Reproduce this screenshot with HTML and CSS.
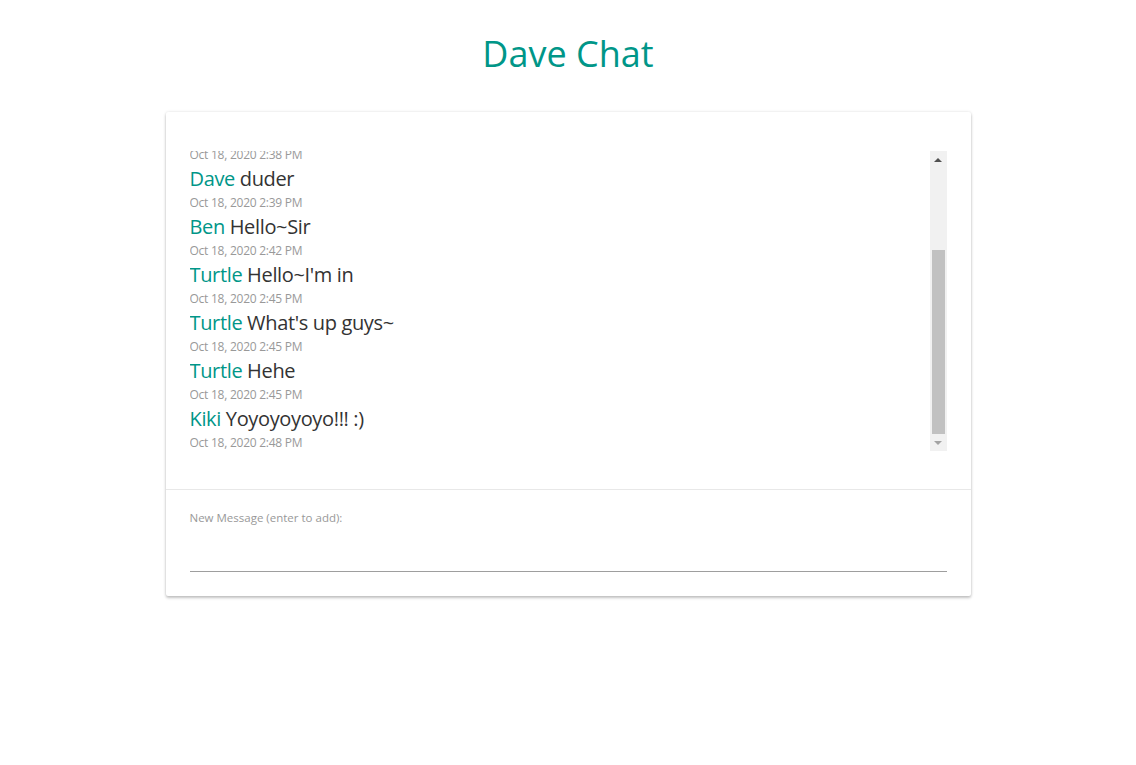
FILE: index.html
```html
<!DOCTYPE html>
<html lang="en">
<head>
<meta charset="utf-8">
<title>Dave Chat</title>
<link rel="stylesheet" href="styles.css">
</head>
<body>
<h1 class="title">Dave Chat</h1>
<main class="card">
  <section class="messages-wrap">
    <div class="messages">
      <div class="msg"><div class="line"><span class="name">Ben</span> Hi there</div><div class="date">Oct 18, 2020 2:38 PM</div></div>
      <div class="msg"><div class="line"><span class="name">Dave</span> duder</div><div class="date">Oct 18, 2020 2:39 PM</div></div>
      <div class="msg"><div class="line"><span class="name">Ben</span> Hello~Sir</div><div class="date">Oct 18, 2020 2:42 PM</div></div>
      <div class="msg"><div class="line"><span class="name">Turtle</span> Hello~I'm in</div><div class="date">Oct 18, 2020 2:45 PM</div></div>
      <div class="msg"><div class="line"><span class="name">Turtle</span> What's up guys~</div><div class="date">Oct 18, 2020 2:45 PM</div></div>
      <div class="msg"><div class="line"><span class="name">Turtle</span> Hehe</div><div class="date">Oct 18, 2020 2:45 PM</div></div>
      <div class="msg"><div class="line"><span class="name">Kiki</span> Yoyoyoyoyo!!! :)</div><div class="date">Oct 18, 2020 2:48 PM</div></div>
    </div>
    <div class="scrollbar" aria-hidden="true">
      <div class="sb-btn"><span class="arrow-up"></span></div>
      <div class="sb-track"><div class="sb-thumb"></div></div>
      <div class="sb-btn"><span class="arrow-down"></span></div>
    </div>
  </section>
  <section class="composer">
    <label class="label" for="msg">New Message (enter to add):</label>
    <input id="msg" class="input" type="text">
  </section>
</main>
</body>
</html>
```
FILE: styles.css
```css
* { box-sizing: border-box; }
html, body { margin: 0; padding: 0; background: #fff; }
html { min-height: 100%; }
body {
  min-height: 765px;
  font-family: "Open Sans", "Noto Sans", "Liberation Sans", sans-serif;
  color: #333;
  overflow: hidden;
}
.title {
  margin: 0;
  padding-top: 29px;
  height: 112px;
  text-align: center;
  font-weight: 400;
  font-size: 36px;
  line-height: 50px;
  color: #009688;
}
.card {
  width: 805px;
  margin: 0 auto;
  background: #fff;
  box-shadow: 0 2px 3px rgba(0,0,0,.22), 0 0 3px rgba(0,0,0,.12);
  border-radius: 2px;
}
.messages-wrap {
  display: flex;
  padding: 39px 24px 38px 24px;
  border-bottom: 1px solid #e8e8e8;
}
.messages {
  flex: 1;
  height: 300px;
  overflow: hidden;
  display: flex;
  flex-direction: column;
  justify-content: flex-end;
}
.msg { display: flex; flex-direction: column; }
.msg:last-child { margin-bottom: -2px; }
.line {
  font-size: 20px;
  line-height: 28px;
  color: #333;
  letter-spacing: -0.35px;
}
.name { color: #009688; }
.date {
  font-size: 12px;
  line-height: 20px;
  color: #999;
  letter-spacing: -0.25px;
}
.scrollbar {
  width: 17px;
  height: 300px;
  background: #f1f1f1;
  display: flex;
  flex-direction: column;
}
.sb-btn {
  height: 17px;
  display: flex;
  align-items: center;
  justify-content: center;
}
.arrow-up, .arrow-down {
  width: 0; height: 0;
  border-left: 4px solid transparent;
  border-right: 4px solid transparent;
}
.arrow-up { border-bottom: 4px solid #505050; }
.arrow-down { border-top: 4px solid #a3a3a3; }
.sb-track {
  flex: 1;
  display: flex;
  flex-direction: column;
  justify-content: flex-end;
  padding: 0 2px;
}
.sb-thumb {
  height: 184px;
  background: #c1c1c1;
}
.composer {
  display: flex;
  flex-direction: column;
  padding: 19px 24px 24px 24px;
}
.label {
  font-size: 11.5px;
  line-height: 18px;
  color: #999;
}
.input {
  margin-top: 20px;
  border: none;
  border-bottom: 1px solid #9e9e9e;
  outline: none;
  height: 25px;
  padding: 0;
  font: inherit;
  font-size: 16px;
  background: transparent;
}
```
